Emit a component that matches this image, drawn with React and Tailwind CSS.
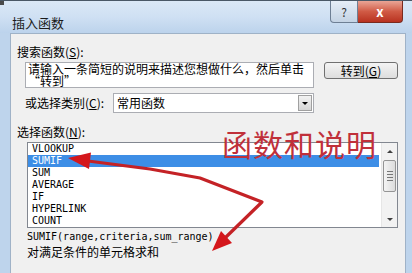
import React from "react";

// 插入函数ダイアログ（Excel / Win7）
const items = ["VLOOKUP", "SUMIF", "SUM", "AVERAGE", "IF", "HYPERLINK", "COUNT"];

function Arrows() {
  return (
    <svg
      className="absolute left-0 top-0 pointer-events-none"
      width="412"
      height="273"
      viewBox="0 0 412 273"
    >
      <polyline
        points="88,161 150,169 200,178 262,202 226,237"
        fill="none"
        stroke="#c42226"
        strokeWidth="3.2"
        strokeLinejoin="round"
        strokeLinecap="round"
      />
      <polygon points="68,158 91,152.5 89,169" fill="#d4171c" />
      <polygon points="212,251 232,243 221,231" fill="#d4171c" />
    </svg>
  );
}

function ScrollBar() {
  return (
    <div className="w-[16px] flex flex-col bg-[#f2f2f2] border-l border-[#e6e6e6]">
      <div className="h-[16px] flex items-center justify-center">
        <div className="w-0 h-0 border-l-[3px] border-r-[3px] border-b-[3px] border-l-transparent border-r-transparent border-b-[#404040]" />
      </div>
      <div className="h-[1px]" />
      <div className="mx-[1px] h-[32px] rounded-[2px] border border-[#959595] bg-gradient-to-r from-[#f4f4f4] to-[#dcdcdc] flex flex-col items-center justify-center gap-[2px]">
        <div className="w-[6px] h-[1px] bg-[#777]" />
        <div className="w-[6px] h-[1px] bg-[#777]" />
        <div className="w-[6px] h-[1px] bg-[#777]" />
        <div className="w-[6px] h-[1px] bg-[#777]" />
      </div>
      <div className="flex-1" />
      <div className="h-[16px] flex items-center justify-center">
        <div className="w-0 h-0 border-l-[3px] border-r-[3px] border-t-[3px] border-l-transparent border-r-transparent border-t-[#404040]" />
      </div>
    </div>
  );
}

export default function App() {
  return (
    <div className="relative w-[412px] h-[273px] overflow-hidden flex flex-col bg-[#bed4ec] font-['Noto_Sans_CJK_SC',sans-serif] text-black">
      {/* タイトルバー */}
      <div className="h-[33px] flex items-start border-t border-[#4a5866] bg-gradient-to-b from-[#dbe8f6] via-[#cfe0f3] to-[#bcd3ec]">
        <div className="w-[4px] h-[4px] bg-[#4a4a4a]" />
        <span className="ml-[8px] mt-[15px] text-[13px] leading-none text-[#1b1b1b]">
          插入函数
        </span>
        <div className="ml-auto mr-[9px] flex">
          <div className="w-[28px] h-[22px] rounded-bl-[4px] border border-t-0 border-[#6e7f94] bg-gradient-to-b from-[#e6eef7] to-[#c4d3e4] flex items-center justify-center text-[12px] leading-none text-[#333]">
            ?
          </div>
          <div className="w-[45px] h-[22px] rounded-br-[4px] border border-t-0 border-l-0 border-[#7a2a1e] bg-gradient-to-b from-[#e9a596] via-[#d05a45] to-[#b8311f] flex items-center justify-center text-[13px] font-bold leading-none text-white">
            x
          </div>
        </div>
      </div>

      <div className="flex flex-1">
        <div className="w-[10px]" />
        {/* 本体 */}
        <div className="flex-1 bg-[#f0f0f0] border-l border-t border-r border-[#9fb2c7] pl-[6px] flex flex-col text-[12px]">
          <div className="mt-[11px] leading-[14px]">
            搜索函数(<span className="underline">S</span>):
          </div>
          <div className="mt-[3px] ml-[8px] flex items-start">
            <div className="w-[289px] h-[26px] bg-white border border-[#abadb3] px-[2px] leading-[12px]">
              <div>请输入一条简短的说明来描述您想做什么，然后单击</div>
              <div>“转到”</div>
            </div>
            <div className="ml-[10px] w-[74px] h-[17px] rounded-[3px] border border-[#707070] bg-gradient-to-b from-[#f4f4f4] to-[#dddddd] flex items-center justify-center leading-none">
              转到(<span className="underline">G</span>)
            </div>
          </div>
          <div className="mt-[5px] ml-[8px] flex items-center">
            <div className="w-[88px] leading-[14px]">
              或选择类别(<span className="underline">C</span>):
            </div>
            <div className="w-[201px] h-[20px] bg-white border border-[#abadb3] flex items-center pl-[3px]">
              <span className="leading-none">常用函数</span>
              <div className="ml-auto mr-[1px] w-[14px] h-[16px] border border-[#a0a0a0] bg-gradient-to-b from-[#f2f2f2] to-[#d6d6d6] flex items-center justify-center">
                <div className="w-0 h-0 border-l-[3px] border-r-[3px] border-t-[3px] border-l-transparent border-r-transparent border-t-black" />
              </div>
            </div>
          </div>
          <div className="mt-[12px] leading-[14px]">
            选择函数(<span className="underline">N</span>):
          </div>
          <div className="mt-[3px] ml-[10px] w-[371px] h-[86px] bg-white border border-[#828790] flex">
            <div className="flex-1 flex flex-col font-['DejaVu_Sans_Mono',monospace] text-[10px]">
              {items.map((name) => (
                <div
                  key={name}
                  className={
                    name === "SUMIF"
                      ? "h-[12px] leading-[12px] pl-[4px] mr-[2px] bg-[#3d8ee6] text-white"
                      : "h-[12px] leading-[12px] pl-[4px]"
                  }
                >
                  {name}
                </div>
              ))}
            </div>
            <ScrollBar />
          </div>
          <div className="mt-[3px] ml-[10px] leading-[12px] font-['DejaVu_Sans_Mono',monospace] text-[10px]">
            SUMIF(range,criteria,sum_range)
          </div>
          <div className="mt-[2px] ml-[10px] leading-[14px]">对满足条件的单元格求和</div>
        </div>
        <div className="w-[6px]" />
      </div>

      {/* 赤い注釈 */}
      <div className="absolute left-[222px] top-[128px] text-[30px] leading-none tracking-[1px] text-[#c0303a]">
        函数和说明
      </div>
      <Arrows />
    </div>
  );
}
